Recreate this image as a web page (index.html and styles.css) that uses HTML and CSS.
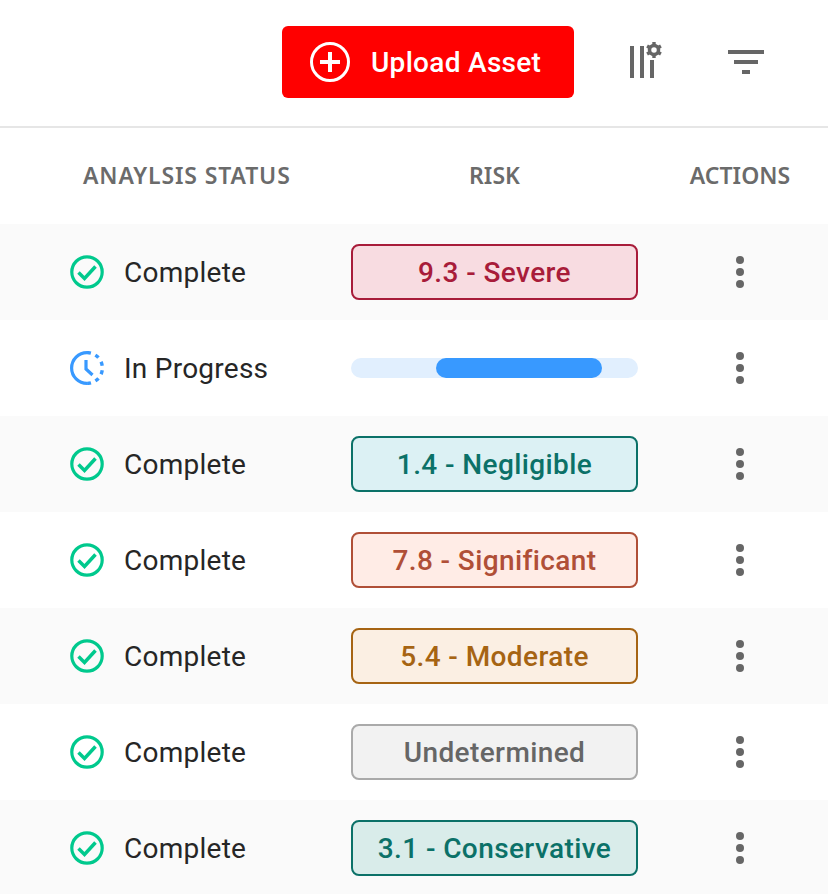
FILE: index.html
```html
<!DOCTYPE html>
<html lang="en">
<head>
<meta charset="utf-8">
<title>Assets</title>
<link rel="stylesheet" href="styles.css">
</head>
<body>
<svg class="defs" width="0" height="0" aria-hidden="true">
  <symbol id="check" viewBox="0 0 34 34">
    <circle cx="17" cy="17" r="15.2" fill="none" stroke="#00c98d" stroke-width="3.200"/>
    <path d="M8.500 17.500l6 6 11-12" fill="none" stroke="#00c98d" stroke-width="3.500"/>
  </symbol>
  <symbol id="dots" viewBox="0 0 8 32">
    <circle cx="4" cy="4" r="4" fill="#666"/>
    <circle cx="4" cy="16" r="4" fill="#666"/>
    <circle cx="4" cy="28" r="4" fill="#666"/>
  </symbol>
</svg>
<main class="page">
  <div class="toolbar">
    <button class="upload" type="button">
      <svg class="upload-icon" viewBox="0 0 40 40"><circle cx="20" cy="20" r="18.5" fill="none" stroke="#fff" stroke-width="3"/><path d="M20 10v20M10 20h20" stroke="#fff" stroke-width="4"/></svg>
      <span>Upload Asset</span>
    </button>
    <svg class="tool columns-icon" viewBox="0 0 32 36">
      <path d="M0 4h4v32H0zM10 4h4v32h-4zM20 18h4v18h-4z" fill="#666"/>
      <circle cx="24" cy="8" r="4.500" fill="none" stroke="#666" stroke-width="3.500"/>
      <g stroke="#666" stroke-width="3.400">
        <path d="M24 0v3M24 13v3"/>
        <path d="M24 0v3M24 13v3" transform="rotate(60 24 8)"/>
        <path d="M24 0v3M24 13v3" transform="rotate(120 24 8)"/>
      </g>
    </svg>
    <svg class="tool filter-icon" viewBox="0 0 36 24"><path d="M0 0h36v4H0zM6 10h24v4H6zM14 20h8v4h-8z" fill="#666"/></svg>
  </div>
  <div class="row head">
    <div class="status-head">ANAYLSIS STATUS</div>
    <div class="risk-head">RISK</div>
    <div class="actions-head">ACTIONS</div>
  </div>
  <div class="row shaded">
    <div class="status"><svg class="status-icon"><use href="#check"/></svg><span>Complete</span></div>
    <div class="badge severe">9.3 - Severe</div>
    <div class="actions"><svg class="dots"><use href="#dots"/></svg></div>
  </div>
  <div class="row">
    <div class="status">
      <svg class="status-icon" viewBox="0 0 34 34">
        <path d="M17 1.600A15.400 15.400 0 1 0 17 32.400" fill="none" stroke="#3899ff" stroke-width="3.200"/>
        <path d="M17 1.600A15.400 15.400 0 0 1 17 32.400" fill="none" stroke="#3899ff" stroke-width="3.400" stroke-dasharray="4 4.800"/>
        <path d="M16 9v9l6.500 6" fill="none" stroke="#3899ff" stroke-width="3.200"/>
      </svg>
      <span>In Progress</span>
    </div>
    <div class="track"><div class="bar"></div></div>
    <div class="actions"><svg class="dots"><use href="#dots"/></svg></div>
  </div>
  <div class="row shaded">
    <div class="status"><svg class="status-icon"><use href="#check"/></svg><span>Complete</span></div>
    <div class="badge negligible">1.4 - Negligible</div>
    <div class="actions"><svg class="dots"><use href="#dots"/></svg></div>
  </div>
  <div class="row">
    <div class="status"><svg class="status-icon"><use href="#check"/></svg><span>Complete</span></div>
    <div class="badge significant">7.8 - Significant</div>
    <div class="actions"><svg class="dots"><use href="#dots"/></svg></div>
  </div>
  <div class="row shaded">
    <div class="status"><svg class="status-icon"><use href="#check"/></svg><span>Complete</span></div>
    <div class="badge moderate">5.4 - Moderate</div>
    <div class="actions"><svg class="dots"><use href="#dots"/></svg></div>
  </div>
  <div class="row">
    <div class="status"><svg class="status-icon"><use href="#check"/></svg><span>Complete</span></div>
    <div class="badge undetermined">Undetermined</div>
    <div class="actions"><svg class="dots"><use href="#dots"/></svg></div>
  </div>
  <div class="row shaded">
    <div class="status"><svg class="status-icon"><use href="#check"/></svg><span>Complete</span></div>
    <div class="badge conservative">3.1 - Conservative</div>
    <div class="actions"><svg class="dots"><use href="#dots"/></svg></div>
  </div>
</main>
</body>
</html>
```
FILE: styles.css
```css
* { box-sizing: border-box; }
html, body { margin: 0; height: 100%; overflow: hidden; background: #fff; }
body { font-family: Roboto, "Liberation Sans", sans-serif; color: #262626; }
.defs { position: absolute; }
.page { width: 828px; }

.toolbar {
  height: 128px;
  border-bottom: 2px solid #e6e6e6;
  display: flex;
  align-items: flex-start;
  padding: 26px 0 0 282px;
}
.upload {
  width: 292px;
  height: 72px;
  border: 0;
  border-radius: 6px;
  background: #ff0000;
  color: #fff;
  display: flex;
  align-items: center;
  padding: 0 0 0 28px;
  font: 500 28px Roboto, sans-serif;
  letter-spacing: 0.3px;
}
.upload-icon { width: 40px; height: 40px; margin-right: 21px; }
.tool { display: block; flex: none; }
.columns-icon { width: 32px; height: 36px; margin: 16px 0 0 56px; }
.filter-icon { width: 36px; height: 24px; margin: 24px 0 0 66px; }

.row {
  height: 96px;
  display: grid;
  grid-template-columns: 351px 287px 1fr;
  align-items: center;
}
.shaded { background: #fafafa; }
.head div {
  font-family: "Noto Sans", "Open Sans", sans-serif;
  font-weight: 600;
  font-size: 23px;
  color: #6b6b6b;
  white-space: nowrap;
  padding-bottom: 2px;
}
.head .status-head { padding-left: 83px; letter-spacing: 0.85px; }
.risk-head { text-align: center; }
.head .actions-head { text-align: center; padding-left: 14px; }

.status { display: flex; align-items: center; padding-left: 70px; font-size: 28px; letter-spacing: 0.25px; }
.status-icon { width: 34px; height: 34px; margin-right: 20px; flex: none; }

.badge {
  height: 56px;
  border: 2px solid;
  border-radius: 8px;
  display: flex;
  align-items: center;
  justify-content: center;
  font-size: 28px;
  font-weight: 500;
  letter-spacing: 0.4px;
}
.severe { background: #f8dce1; border-color: #a81c3a; color: #a81c3a; }
.negligible { background: #dcf1f4; border-color: #0b7168; color: #0b7168; }
.significant { background: #ffece6; border-color: #b04f37; color: #b04f37; }
.moderate { background: #fbefe3; border-color: #a66413; color: #a66413; }
.undetermined { background: #f2f2f2; border-color: #aaa; color: #666; }
.conservative { background: #d9ecea; border-color: #0b7168; color: #0b7168; }

.track { height: 20px; border-radius: 10px; background: #e1effe; padding-left: 85px; }
.bar { width: 166px; height: 20px; border-radius: 10px; background: #3899ff; }

.actions { display: flex; justify-content: center; padding-left: 14px; }
.dots { width: 8px; height: 32px; display: block; }
```
